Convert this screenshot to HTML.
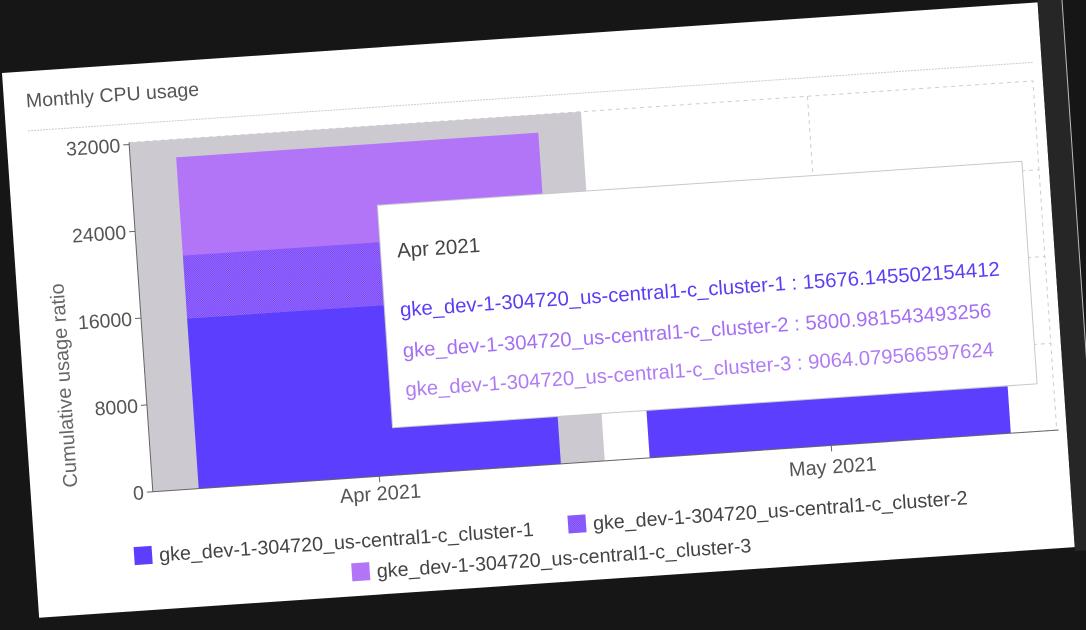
<!DOCTYPE html>
<html><head><meta charset="utf-8"><style>
html,body{margin:0;padding:0;background:#161616;width:1086px;height:630px;overflow:hidden}
#card{position:absolute;left:2px;top:73px;width:1038px;height:546px;background:#fff;transform:rotate(-3.9deg);transform-origin:0 0}
#strip{position:absolute;left:1038px;top:-10px;width:24px;height:560px;background:#262626;border-right:1px solid #bbb}
svg{position:absolute;left:0;top:0}
text{font-family:"Liberation Sans",sans-serif}
</style></head><body>
<div id="card">
<div id="strip"></div>
<svg width="1038" height="546" viewBox="0 0 1038 546">
<defs><pattern id="dots" width="2" height="2" patternUnits="userSpaceOnUse"><rect width="2" height="2" fill="#b375f8"/><rect width="1" height="1" fill="#5c3eff"/><rect x="1" y="1" width="1" height="1" fill="#5c3eff"/></pattern></defs>
<text x="22" y="36" font-size="19.5" fill="#555">Monthly CPU usage</text>
<line x1="22" y1="59.5" x2="1030" y2="59.5" stroke="#ccc" stroke-dasharray="2,1"/>
<g stroke="#ccc" stroke-dasharray="4,4" fill="none">
<rect x="122" y="78" width="906" height="350"/>
<line x1="122" y1="167" x2="1028" y2="167"/>
<line x1="122" y1="254" x2="1028" y2="254"/>
<line x1="122" y1="341" x2="1028" y2="341"/>
<line x1="802" y1="78" x2="802" y2="428"/>
<line x1="349" y1="78" x2="349" y2="428"/>
</g>
<rect x="122" y="78" width="453" height="350" fill="#cdc9d1"/>
<rect x="168" y="96" width="363" height="99" fill="#b375f8"/>
<rect x="168" y="194.5" width="363" height="63" fill="url(#dots)"/>
<rect x="168" y="257.5" width="363" height="170.5" fill="#5c3eff"/>
<rect x="620" y="280" width="362" height="148" fill="#5c3eff"/>
<line x1="122" y1="78" x2="122" y2="428" stroke="#666"/>
<line x1="122" y1="428" x2="1030" y2="428" stroke="#666"/>
<g stroke="#666"><line x1="116" y1="80" x2="122" y2="80"/><line x1="116" y1="167" x2="122" y2="167"/><line x1="116" y1="254" x2="122" y2="254"/><line x1="116" y1="341" x2="122" y2="341"/><line x1="116" y1="428" x2="122" y2="428"/><line x1="349" y1="428" x2="349" y2="434"/><line x1="802" y1="428" x2="802" y2="434"/></g>
<g font-size="19.5" fill="#555" text-anchor="end">
<text x="113" y="87">32000</text><text x="113" y="174">24000</text><text x="113" y="261">16000</text><text x="113" y="348">8000</text><text x="113" y="435">0</text>
</g>
<text transform="translate(47,316) rotate(-90)" font-size="20" fill="#666" text-anchor="middle">Cumulative usage ratio</text>
<text x="349" y="452" font-size="20" fill="#555" text-anchor="middle">Apr 2021</text>
<text x="802" y="456" font-size="20" fill="#555" text-anchor="middle">May 2021</text>
<rect x="99" y="482" width="18" height="18" fill="#5c3eff"/>
<text x="124" y="498" font-size="19.7" fill="#444">gke_dev-1-304720_us-central1-c_cluster-1</text>
<rect x="534" y="480" width="18" height="18" fill="url(#dots)"/>
<text x="559" y="496" font-size="19.7" fill="#444">gke_dev-1-304720_us-central1-c_cluster-2</text>
<rect x="315" y="513" width="18" height="18" fill="#b375f8"/>
<text x="340" y="529" font-size="19.7" fill="#444">gke_dev-1-304720_us-central1-c_cluster-3</text>
<rect x="365.5" y="157.5" width="646" height="223" fill="#fff" stroke="#c8c8c8"/>
<text x="382" y="211" font-size="20.5" fill="#444">Apr 2021</text>
<text x="381" y="270" font-size="20.3" fill="#5b3df5">gke_dev-1-304720_us-central1-c_cluster-1 : 15676.145502154412</text>
<text x="381" y="311" font-size="20.3" fill="#a46ef5">gke_dev-1-304720_us-central1-c_cluster-2 : 5800.981543493256</text>
<text x="381" y="350" font-size="20.3" fill="#b07cf3">gke_dev-1-304720_us-central1-c_cluster-3 : 9064.079566597624</text>
</svg>
</div>
</body></html>
